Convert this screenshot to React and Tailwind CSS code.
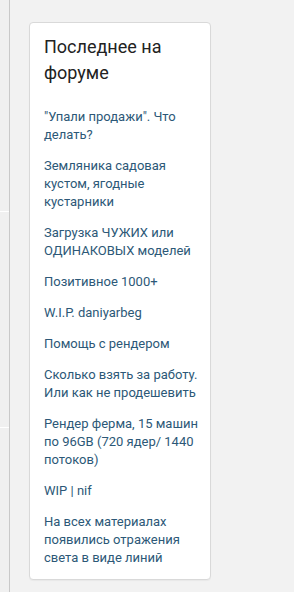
import React from 'react';

const posts = [
  '"Упали продажи". Что делать?',
  'Земляника садовая кустом, ягодные кустарники',
  'Загрузка ЧУЖИХ или ОДИНАКОВЫХ моделей',
  'Позитивное 1000+',
  'W.I.P. daniyarbeg',
  'Помощь с рендером',
  'Сколько взять за работу. Или как не продешевить',
  'Рендер ферма, 15 машин по 96GB (720 ядер/ 1440 потоков)',
  'WIP | nif',
  'На всех материалах появились отражения света в виде линий',
];

const App = () => {
  return (
    <div
      className="flex min-h-[592px] bg-[#f2f2f2]"
      style={{ fontFamily: 'Roboto, "Noto Sans", sans-serif' }}
    >
      {/* left strip */}
      <div className="flex w-[9px] flex-col bg-[#f0f0f0]">
        <div className="h-[211px]" />
        <div className="h-px bg-white" />
        <div className="h-[215px]" />
        <div className="h-px bg-white" />
      </div>
      <div className="w-px bg-[#c9c9c9]" />

      <div className="pl-[19px] pt-[22px]">
        <div className="w-[182px] rounded-[4px] border border-[#d9d9d9] bg-white pb-[12px] pl-[14px] pr-[12px] pt-[11px] shadow-[0_1px_1px_rgba(0,0,0,0.04)]">
          <h3 className="text-[18px] font-normal leading-[26px] text-[#222]">
            Последнее на форуме
          </h3>
          <ul className="mt-[22px] flex flex-col gap-[13px]">
            {posts.map((p) => (
              <li key={p}>
                <a href="#" className="block text-[13px] leading-[18px] text-[#2c5877]">
                  {p}
                </a>
              </li>
            ))}
          </ul>
        </div>
      </div>
    </div>
  );
};

export default App;
